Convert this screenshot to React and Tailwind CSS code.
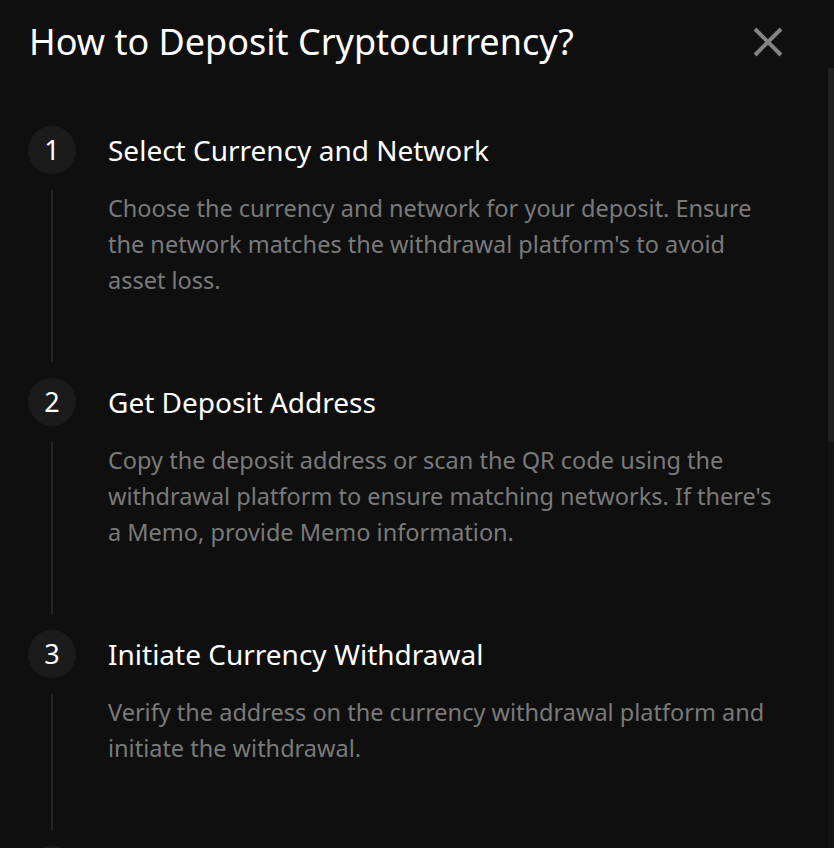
import React from "react";

const steps = [
  {
    n: "1",
    title: "Select Currency and Network",
    desc: "Choose the currency and network for your deposit. Ensure the network matches the withdrawal platform's to avoid asset loss.",
  },
  {
    n: "2",
    title: "Get Deposit Address",
    desc: "Copy the deposit address or scan the QR code using the withdrawal platform to ensure matching networks. If there's a Memo, provide Memo information.",
  },
  {
    n: "3",
    title: "Initiate Currency Withdrawal",
    desc: "Verify the address on the currency withdrawal platform and initiate the withdrawal.",
  },
];

export default function App() {
  return (
    <div
      className="w-[834px] h-[848px] overflow-hidden bg-[#0f0f0f] flex flex-col"
      style={{ fontFamily: '"Noto Sans", "Open Sans", sans-serif' }}
    >
      <div className="h-[68px] shrink-0 flex items-start justify-between pl-[29px] pr-[50px] pt-[18px]">
        <h1 className="text-[36px] leading-[48px] text-white font-normal">
          How to Deposit Cryptocurrency?
        </h1>
        <button className="w-[32px] h-[48px] flex items-center justify-center">
          <svg width="32" height="32" viewBox="0 0 32 32">
            <path d="M3 3 L29 29 M29 3 L3 29" stroke="#848484" strokeWidth="4" strokeLinecap="butt" />
          </svg>
        </button>
      </div>
      <div className="relative flex-1 overflow-hidden">
        <div className="pt-[58px] pl-[28px] pr-[40px]">
          {steps.map((s) => (
            <div key={s.n} className="flex">
              <div className="w-[48px] shrink-0 flex flex-col items-center">
                <div className="w-[48px] h-[48px] rounded-full bg-[#1b1b1b] flex items-center justify-center text-white text-[27px]">
                  {s.n}
                </div>
                <div className="w-[2px] flex-1 bg-[#252525] my-[16px]" />
              </div>
              <div className="ml-[32px] flex-1">
                <div className="h-[48px] flex items-center text-white text-[28px]">{s.title}</div>
                <p className="mt-[16px] pb-[80px] max-w-[670px] text-[23.5px] leading-[36px] text-[#7a7a7a]">{s.desc}</p>
              </div>
            </div>
          ))}
          <div className="flex">
            <div className="w-[48px] h-[48px] rounded-full bg-[#1b1b1b]" />
          </div>
        </div>
        <div className="absolute right-0 top-0 bottom-0 w-[6px] bg-[#131313]" />
        <div className="absolute right-0 top-0 w-[6px] h-[374px] bg-[#1e1e1e]" />
      </div>
    </div>
  );
}
